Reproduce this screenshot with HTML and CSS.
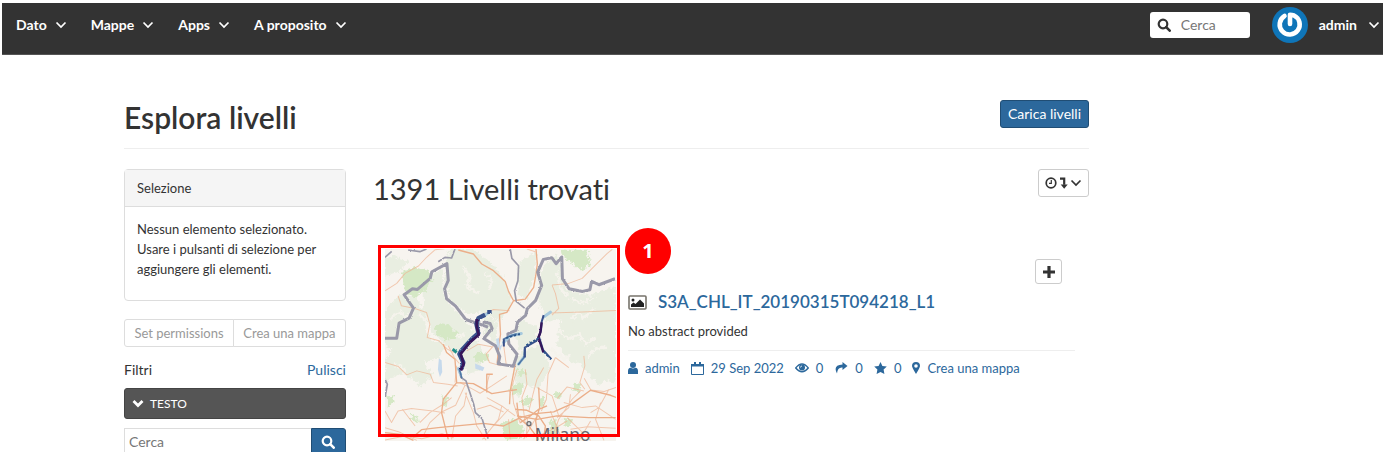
FILE: index.html
```html
<!DOCTYPE html>
<html lang="it">
<head>
<meta charset="utf-8">
<title>Esplora livelli</title>
<link rel="stylesheet" href="styles.css">
</head>
<body>
<svg class="defs" aria-hidden="true">
  <symbol id="chevron" viewBox="0 0 12 8"><path d="M1.500 1.500 6 6l4.500-4.500" fill="none" stroke="currentColor" stroke-width="1.700"/></symbol>
  <symbol id="search" viewBox="0 0 14 14"><circle cx="6" cy="6" r="4.300" fill="none" stroke="currentColor" stroke-width="2.200"/><path d="m9.200 9.200 3.500 3.500" stroke="currentColor" stroke-width="2.600" stroke-linecap="round"/></symbol>
</svg>
<div class="frame">
<header class="topbar">
  <nav class="menu">
    <button class="menu-item" type="button">Dato <svg class="chev"><use href="#chevron"/></svg></button>
    <button class="menu-item" type="button">Mappe <svg class="chev"><use href="#chevron"/></svg></button>
    <button class="menu-item" type="button">Apps <svg class="chev"><use href="#chevron"/></svg></button>
    <button class="menu-item" type="button">A proposito <svg class="chev"><use href="#chevron"/></svg></button>
  </nav>
  <label class="top-search"><svg class="ico"><use href="#search"/></svg><input type="text" placeholder="Cerca" aria-label="Cerca"></label>
  <button class="menu-item user" type="button">
    <svg class="avatar" viewBox="0 0 36 36"><circle cx="18" cy="18" r="18" fill="#0f75b8"/><path d="M12.500 9A10 10 0 1 0 22 8.500Q20 7.800 18 7.800V17" fill="none" stroke="#fff" stroke-width="4.600" stroke-linecap="round" stroke-linejoin="round"/></svg>
    admin <svg class="chev"><use href="#chevron"/></svg>
  </button>
</header>
<main class="page">
  <div class="page-head">
    <h1>Esplora livelli</h1>
    <a class="btn primary" href="#">Carica livelli</a>
  </div>
  <div class="columns">
    <aside class="side">
      <section class="panel">
        <h2 class="panel-title">Selezione</h2>
        <p class="panel-text">Nessun elemento selezionato. Usare i pulsanti di selezione per aggiungere gli elementi.</p>
      </section>
      <div class="btn-group">
        <button type="button" disabled>Set permissions</button><button type="button" disabled>Crea una mappa</button>
      </div>
      <div class="filters"><span>Filtri</span><a href="#">Pulisci</a></div>
      <button class="accordion" type="button"><svg viewBox="0 0 12 9"><path d="M1.500 2 6 6.500 10.500 2" fill="none" stroke="currentColor" stroke-width="2.800"/></svg>TESTO</button>
      <form class="side-search">
        <input type="text" placeholder="Cerca" aria-label="Cerca testo">
        <button type="button" aria-label="Avvia ricerca"><svg class="ico"><use href="#search"/></svg></button>
      </form>
    </aside>
    <section class="results">
      <div class="results-head">
        <h2>1391 Livelli trovati</h2>
        <button class="btn sort" type="button" aria-label="Ordina">
          <svg class="sort-ico" viewBox="0 0 23 12"><circle cx="6" cy="6" r="4.800" fill="none" stroke="currentColor" stroke-width="1.700"/><path d="M6.300 3v3.300H4" fill="none" stroke="currentColor" stroke-width="1.200"/><path d="M15 1.700h4.200v6" fill="none" stroke="currentColor" stroke-width="2.200"/><path d="M15.700 7.400h7l-3.500 4.300z" fill="currentColor"/></svg><svg class="chev"><use href="#chevron"/></svg>
        </button>
      </div>
      <article class="layer">
        <a class="thumb" href="#" aria-label="Anteprima">
          <svg class="map" viewBox="46 40 690 575" preserveAspectRatio="none">
            <filter id="rough" x="0" y="0" width="1" height="1"><feTurbulence type="fractalNoise" baseFrequency="0.09" numOctaves="3" seed="4"/><feDisplacementMap in="SourceGraphic" scale="22" xChannelSelector="R" yChannelSelector="G"/></filter>
            <filter id="jitter"><feTurbulence type="fractalNoise" baseFrequency="0.3" numOctaves="2" seed="7"/><feDisplacementMap in="SourceGraphic" scale="6" xChannelSelector="R" yChannelSelector="G"/></filter>
            <svg x="46" y="40" width="690" height="575" viewBox="46 40 690 575">
            <rect x="46" y="40" width="690" height="575" fill="#f7f4ef"/>
            <g filter="url(#rough)">
            <g fill="#e9eee1">
              <path d="M235 40h70l50 35 45 50 25 75-35 55-60-25-35 8-52-42-20-70z"/>
              <path d="M46 225l45-50 50 15 25 40 15 80 45 15-20 45-60 10-55-12-45-40zM160 130l55-30 10 90 55 60 35 35-10 45-60 10-60-50-22-70zM70 340l75 15 45 60-35 40-55-45-54 30v-70z"/>
              <path d="M445 80l55-30-5 70-25 70-25-10zM510 100l50-50 25 110 70 20 80-30v290l-45-10-50-55-35 10-45-60 10-75-45 10-20-70z"/>
              <path d="M455 255l50 20-10 40-45 30-20-60zM600 230l75-10 61 40v130l-50 60-55-60zM340 235l40 20v70l-35-30zM46 70l25-10 45 15-20 30-50 15z"/>
              <path d="M250 330l60-25 35 45-20 55-30 10zM430 360l75-30 35 60-35 70-40-15-25 45z"/>
            </g>
            <g fill="none" stroke="#f5f3ec" stroke-width="8">
              <path d="M60 250l30-20 20 12 20-12M145 235l25 20 5 40M275 90l25 30-8 30 30 22M345 110l20 25-8 25M240 280l25 22 20-10M560 110l10 50 25 25M565 285l30 25 30-15 22 30 25-20M600 250l20-20 20 15 30-25M70 385l25 8 10 20M540 340l40 30 20-12M600 190l35 12 40-15M650 370l20-30 35-8"/>
            </g>
            <g fill="#d5e8c5">
              <path d="M98 110l35-15 45 12 10 30-20 10 0 20-20 5-10 20-25-20-12-25zM570 42h80l10 45-25 18-25-20-35-25zM194 275l18-16 23 5 18 20 17 8-12 17-33 2-28-18zM315 355l20-10 22 10-3 18-30 8-12-14z"/>
              <path d="M390 565l40-15 30 20-5 35-50 8zM440 440l20 5-5 25-30 8-5-20zM450 500l22-20 18 10-15 22zM540 560l15-15 10 25-8 40-20-10zM50 480l20 2 5 20-20 10zM120 530l22 10 5 22-20-8zM215 480l20 5-5 28-15-5zM580 545l25 5-5 20-18-4zM610 440l25 5-10 25-20-8zM555 465l18 5-5 20-15-5zM440 400l20-5 8 20-23 7zM515 480l10 15-12 20-8-18z"/>
            </g>
            </g>
            <g fill="none" stroke="#efb594" stroke-width="3" stroke-linejoin="round" opacity=".7">
              <path d="M46 165l35-22 25-30 40-22 25-27 25-22 28-3M85 180l10 30 40 8 35 12 10 35-8 40 35 10 25 25 20 10M545 148l10 25 10 45-20 20M545 148l50-5 40-15 35-35 40-40 15-12M470 40l25 8M340 235l30-14 48 4M540 232l95-3 101-5"/>
              <path d="M46 380l40 12 25 25 30-12 40 10 10 25 42 5 30 5M150 560l30-30 40-25 25-20M46 575l40 12 55 26M65 560l20-35 40-7 70 8 30 5M98 520l38 50M270 440l35 18 25 14 35-22 45-30M290 470l-8 40-25 30-12 70M285 470l25 60 10 40 28 43M370 330l-22 25 10 25 35 10M290 345l35-20 40 8M400 325l8 60M520 395l-20 35-12 45-12 50M555 365l-22 50-5 75-15 35M555 365l40 30M640 360l3 30-15 50 15 20M440 402l-15 50 5 50 20 60M465 400l5 45-15 40 10 80M350 485l45 25 40 30M395 510l-10 40-48 60M320 520l40-12 40 20M415 520l-45 50M580 500l55 15 40-5 60 40M500 455l45 25 20 60M660 555l-35 60M590 545l70 68M690 500l-15 50 25 63M540 525l35 88M630 465l-25 25-40 60-22 60M640 465l-50-12-30 35M600 475l-5 40-35 30M415 550l5 60M472 545l-4 60M500 540l-40 70M736 455l-35 12-40-5-20-35M715 460l-30 55-25 15"/>
              <path d="M46 612l60-12 50 8 60-15 35 12M160 600l20-40 35-32 42-20 28-60M348 455l10-40M600 580l50-8 85 5M505 600l60-30 25-15M46 525l20 35M260 390l-5 50M235 330l18 35 15 18"/>
            </g>
            <g fill="none" stroke="#ebae89" stroke-width="4" stroke-linejoin="round">
              <path d="M265 43l45 12 25 30 35 20 35 32 10 30 15 28 35-5 25-35 7-40 4-30-4-45M430 195l-20 35-22 6 3 60-5 35-5 50M220 325l10 25 25 20 5 70-40 50-5 40 20 80M260 440l50 3 55 30 75-12M350 470v-55h18M435 385l-15 80-2 40M130 603l25-22 50-6 135-13 60 8 50-25 45-12 55-5 55-25 55-40 60 15 38 15M46 590l45 5 40 18M440 540l60 10 60-10 95 5 80 0M440 500l5 45 30 25 30 40M505 455l3 60-12 40 8 58M435 520l35 3 35 17 20 30-5 40M450 560l30-20 25-20 25-10"/>
            </g>
            <g fill="#c6d9ec"><path d="M207 368l8 5 2 35-7 15-6-22zM315 383l28 12-5 10-22-6zM378 310l8-4 3 22-8 12zM385 335l13-12-8 22z"/></g>
            <g fill="none" stroke="#9a99a9" stroke-linejoin="round" filter="url(#jitter)">
              <path stroke-width="9" d="M46 307h35l7-45 30-15 13-30-28-40 25-18 15 2 38-33 5-20 45-24 4 50-11 25 6 30 27 22 30 40 45 15 22 8M338 258l22 5 6 15-25 30 35 22 13 32-5 22 45 7 12-35-25-32-3-30 24-10 5-25 24-20 5-20 25-25 18-45-12-40 17-38 25-5 13 18 17-20 2 65 20 30 40 8 22-5 5-25 22 10 48-18"/>
              <path stroke-width="5" d="M420 40l5 28 20 22-2 45-10 30 5 32 25 20M46 65l20-18M115 43l35 5 20-8M205 78l20-13 20 2 10-27M46 430l7 15-7 40M265 395l8 30 15 10 10 30 13 40 5 25 20 18 18 60"/>
            </g>
            <g fill="none" stroke-linejoin="round" stroke-linecap="round" stroke-dasharray="8 3">
              <path stroke="#a7c9de" stroke-width="9" d="M357 229l-18 13M265 398l8 20M540 229l-20 15M400 320l20-20 33-7M460 365l-15 20"/>
              <path stroke="#4f76a4" stroke-width="5" d="M268 400l7 25M445 385l16-20 2-30M400 310l15-8 25-8"/>
            </g>
            <g fill="none" stroke-linejoin="round" filter="url(#jitter)">
              <path stroke="#39518b" stroke-width="13" d="M358 223v12M345 237l-20 10-6 18 6 27-20 18-30 33-7 12 12 25-6 20"/>
              <path stroke="#34125a" stroke-width="8" d="M320 250v22l6 25-26 22-28 35 9 30-8 20"/>
              <path stroke="#39518b" stroke-width="6" d="M520 238l-6 20-2 25-6 20-8 12-34 20v30M505 300l13 42 25 28M401 310v22"/>
              <path stroke="#34125a" stroke-width="7" d="M514 260l-4 30-6 15 7 20 8 25"/>
              <path stroke="#218f8a" stroke-width="9" d="M248 340l12 10"/>
              <path stroke="#29558a" stroke-width="5" stroke-dasharray="7 5" d="M520 348l24 25M468 328l38-22M408 307l45-14"/>
            </g>
            <circle cx="476" cy="563" r="6" fill="#ddd" stroke="#6d6d72" stroke-width="4"/>
            </svg>
            <text class="map-city" x="493" y="614">Milano</text>
          </svg>
          <span class="step">1</span>
        </a>
        <div class="layer-body">
          <div class="layer-tools"><button class="btn add" type="button" aria-label="Aggiungi"><svg viewBox="0 0 12 12"><path d="M6 0v12M0 6h12" stroke="currentColor" stroke-width="3.200"/></svg></button></div>
          <h3><svg class="picture" viewBox="0 0 19 15"><rect x="1" y="1" width="17" height="13" rx="1" fill="none" stroke="#77736b" stroke-width="1.600"/><circle cx="5" cy="5" r="1.500" fill="#222"/><path d="M3 12V9.500L5.500 7.500 7.500 9 12 4.500l4 4V12z" fill="#222"/></svg><a href="#">S3A_CHL_IT_20190315T094218_L1</a></h3>
          <p class="abstract">No abstract provided</p>
          <div class="meta">
            <a href="#"><svg width="10" height="12" viewBox="0 0 10 12"><circle cx="5" cy="3" r="3"/><path d="M0 12V9q0-3 2.500-3.200 2.500 1.600 5 0Q10 6 10 9v3z"/></svg>admin</a>
            <a href="#"><svg width="13" height="13" viewBox="0 0 13 13"><path d="M.5 2.500h12v10H.5z" fill="none" stroke="currentColor"/><path d="M0 2h13v2.500H0zM3 0h2v3H3zM8 0h2v3H8z"/></svg>29 Sep 2022</a>
            <a href="#"><svg width="14" height="10" viewBox="0 0 14 10"><path d="M.7 5Q7-3 13.300 5 7 12.500.7 5z" fill="none" stroke="currentColor" stroke-width="1.300"/><circle cx="7" cy="4.500" r="3"/><path d="M5.500 4.500Q5.500 3 7 3" fill="none" stroke="#fff" stroke-width=".8"/></svg>0</a>
            <a href="#"><svg width="14" height="12" viewBox="0 0 13 12"><path d="M8 0l5 4-5 4V5.500Q3 5 2.500 11.500-2 3 8 2.500z"/></svg>0</a>
            <a href="#"><svg width="13" height="12" viewBox="0 0 13 12"><path d="M6.500 0l1.900 4 4.400.6-3.200 3 .8 4.400-3.900-2.100L2.600 12l.8-4.400-3.200-3 4.400-.6z"/></svg>0</a>
            <a href="#"><svg width="8" height="12" viewBox="0 0 8 12"><path fill-rule="evenodd" d="M4 0a4 4 0 0 1 4 4Q8 5.500 4 12 0 5.500 0 4a4 4 0 0 1 4-4zm0 2.200a1.800 1.800 0 1 0 0 3.600 1.800 1.800 0 0 0 0-3.600z"/></svg>Crea una mappa</a>
          </div>
        </div>
      </article>
    </section>
  </div>
</main>
</div>
</body>
</html>
```
FILE: styles.css
```css
* { box-sizing: border-box; }
body { margin: 0; padding: 3px 0 5px 2px; background: #fff; color: #333; font: 13px/20px Lato, "Open Sans", sans-serif; font-variant-ligatures: none; }
button, input { font: inherit; color: inherit; }
button { cursor: pointer; }
a { color: #2c689c; text-decoration: none; }
h1, h2, h3, p { margin: 0; }
svg { display: block; flex: none; fill: currentColor; }
.defs { position: absolute; width: 0; height: 0; }
.frame { height: calc(100vh - 8px); overflow: hidden; }
.chev { width: 12px; height: 8px; }
.ico { width: 14px; height: 14px; }

.topbar { display: flex; align-items: center; height: 52px; padding: 0 3px 8px 14px; background: #333; border-bottom: 1px solid #555; color: #fff; }
.menu { display: flex; gap: 24px; flex: 1; font-size: 14px; }
.menu-item { display: flex; align-items: center; gap: 8px; padding: 0; border: 0; background: none; font-weight: 700; }
.top-search { display: flex; align-items: center; gap: 10px; width: 100px; height: 26px; padding: 0 7px; border-radius: 3px; background: #fff; color: #333; font-size: 14px; }
.top-search input { width: 100%; min-width: 0; padding: 0; border: 0; outline: 0; background: none; }
input::placeholder { color: #777; opacity: 1; }
.user { gap: 11px; margin-left: 22px; font-size: 14px; }
.avatar { width: 36px; height: 36px; }

.page { padding: 0 294px 0 122px; }
.page-head { display: flex; justify-content: space-between; align-items: flex-start; padding: 45px 0 14px; border-bottom: 1px solid #eee; }
h1 { font-size: 30px; line-height: 34px; font-weight: 600; }
.btn { display: flex; align-items: center; justify-content: center; border: 1px solid #ccc; border-radius: 3px; background: #fff; }
.primary { height: 28px; padding: 0 7px; border-color: #204d74; background: #2c689c; color: #fff; font-size: 14px; }
.columns { display: grid; grid-template-columns: 23% 1fr; gap: 27px; padding-top: 20px; }

.panel { border: 1px solid #ddd; border-radius: 4px; }
.panel-title { padding: 8px 12px; border-bottom: 1px solid #ddd; background: #f5f5f5; font-size: 13px; line-height: 20px; font-weight: 400; }
.panel-text { padding: 12px 12px 21px; }
.btn-group { display: flex; margin-top: 18px; }
.btn-group button { flex: 1 0 auto; height: 28px; padding: 0; border: 1px solid #ddd; background: #fff; color: #999; }
.btn-group button:first-child { border-radius: 3px 0 0 3px; }
.btn-group button:last-child { margin-left: -1px; border-radius: 0 3px 3px 0; }
.filters { display: flex; justify-content: space-between; margin-top: 13px; font-size: 14px; }
.accordion { display: flex; align-items: center; gap: 6px; width: 100%; height: 31px; margin-top: 8px; padding: 0 7px; border: 1px solid #444; border-radius: 3px; background: #555; color: #fff; font-size: 12px; }
.accordion svg { width: 12px; height: 9px; }
.side-search { display: flex; margin-top: 9px; height: 28px; font-size: 14px; }
.side-search input { flex: 1; min-width: 0; padding: 0 4px; border: 1px solid #ddd; border-right: 0; }
.side-search button { display: flex; align-items: center; justify-content: center; width: 35px; padding: 0; border: 1px solid #204d74; border-radius: 0 3px 3px 0; background: #2c689c; color: #fff; }

.results-head { display: flex; justify-content: space-between; align-items: flex-start; }
.results-head h2 { font-size: 29px; line-height: 40px; font-weight: 400; }
.sort { gap: 2px; height: 28px; padding: 0 6px; }
.sort-ico { width: 23px; height: 12px; }
.layer { display: flex; gap: 8px; margin: 36px 14px 0 5px; }
.thumb { position: relative; flex: none; width: 242px; height: 192px; border: 3px solid #f00; padding: 1px 0 0 4px; }
.map { width: 231px; height: 192px; position: relative; z-index: -1; overflow: visible; }
.map-city { fill: #66666b; font: 52px "Noto Sans", sans-serif; }
.step { position: absolute; top: -20px; right: -54px; width: 46px; height: 46px; border-radius: 50%; background: #f00; color: #fff; font: 700 20px/46px "Noto Sans", sans-serif; text-align: center; }
.layer-body { flex: 1; min-width: 0; padding-top: 14px; }
.layer-tools { display: flex; justify-content: flex-end; padding-right: 13px; }
.add { width: 27px; height: 25px; padding: 0; }
.add svg { width: 12px; height: 12px; }
h3 { display: flex; align-items: center; gap: 11px; margin-top: 6px; font-size: 17px; line-height: 24px; font-weight: 600; }
.picture { width: 19px; height: 15px; }
.abstract { margin-top: 7px; padding-bottom: 9px; border-bottom: 1px solid #eee; }
.meta { display: flex; gap: 11px; margin-top: 7px; }
.meta a { display: flex; align-items: center; gap: 7px; }
```
